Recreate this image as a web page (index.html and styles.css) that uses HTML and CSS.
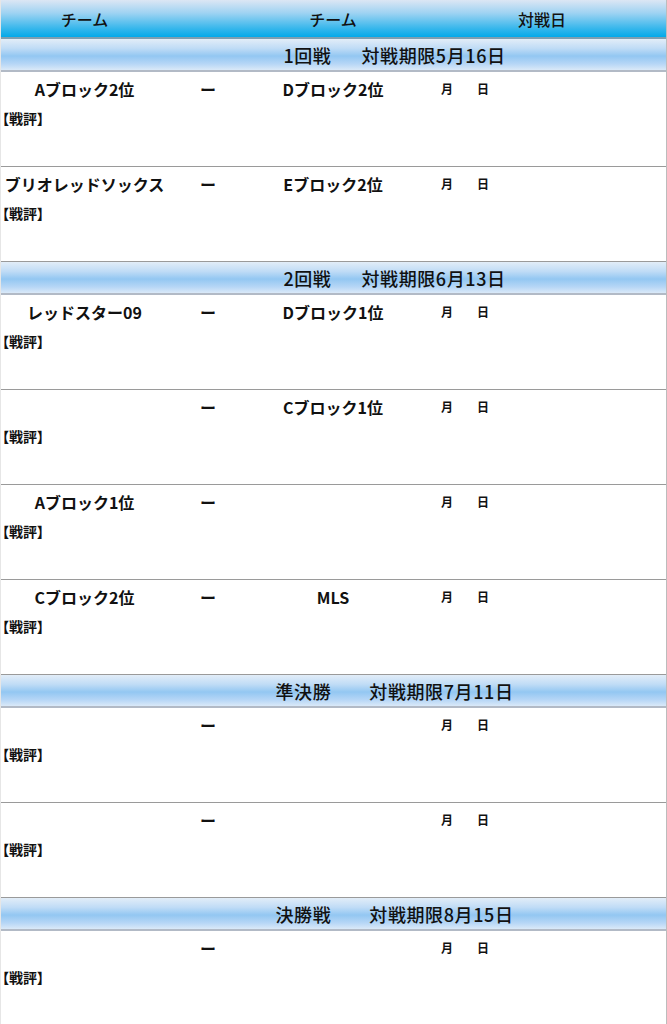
FILE: index.html
```html
<!DOCTYPE html>
<html lang="ja">
<head>
<meta charset="utf-8">
<title>トーナメント</title>
<link rel="stylesheet" href="styles.css">
</head>
<body>
<div class="board">
  <div class="head">
    <div class="c1">チーム</div>
    <div class="c2"></div>
    <div class="c3">チーム</div>
    <div class="c4">対戦日</div>
  </div>

  <div class="round"><span class="name">1回戦</span><span class="limit">対戦期限5月16日</span></div>
  <div class="match">
    <div class="line"><div class="c1">Aブロック2位</div><div class="c2">ー</div><div class="c3">Dブロック2位</div><div class="c4 date">月　　日</div></div>
    <div class="review">【戦評】</div>
  </div>
  <div class="match">
    <div class="line"><div class="c1">ブリオレッドソックス</div><div class="c2">ー</div><div class="c3">Eブロック2位</div><div class="c4 date">月　　日</div></div>
    <div class="review">【戦評】</div>
  </div>

  <div class="round"><span class="name">2回戦</span><span class="limit">対戦期限6月13日</span></div>
  <div class="match">
    <div class="line"><div class="c1">レッドスター09</div><div class="c2">ー</div><div class="c3">Dブロック1位</div><div class="c4 date">月　　日</div></div>
    <div class="review">【戦評】</div>
  </div>
  <div class="match">
    <div class="line"><div class="c1"></div><div class="c2">ー</div><div class="c3">Cブロック1位</div><div class="c4 date">月　　日</div></div>
    <div class="review">【戦評】</div>
  </div>
  <div class="match">
    <div class="line"><div class="c1">Aブロック1位</div><div class="c2">ー</div><div class="c3"></div><div class="c4 date">月　　日</div></div>
    <div class="review">【戦評】</div>
  </div>
  <div class="match">
    <div class="line"><div class="c1">Cブロック2位</div><div class="c2">ー</div><div class="c3">MLS</div><div class="c4 date">月　　日</div></div>
    <div class="review">【戦評】</div>
  </div>

  <div class="round wide"><span class="name">準決勝</span><span class="limit">対戦期限7月11日</span></div>
  <div class="match">
    <div class="line"><div class="c1"></div><div class="c2">ー</div><div class="c3"></div><div class="c4 date">月　　日</div></div>
    <div class="review">【戦評】</div>
  </div>
  <div class="match">
    <div class="line"><div class="c1"></div><div class="c2">ー</div><div class="c3"></div><div class="c4 date">月　　日</div></div>
    <div class="review">【戦評】</div>
  </div>

  <div class="round wide"><span class="name">決勝戦</span><span class="limit">対戦期限8月15日</span></div>
  <div class="match">
    <div class="line"><div class="c1"></div><div class="c2">ー</div><div class="c3"></div><div class="c4 date">月　　日</div></div>
    <div class="review">【戦評】</div>
  </div>
</div>
</body>
</html>
```

FILE: styles.css
```css
html, body {
  margin: 0;
  padding: 0;
  background: #ffffff;
}
body {
  font-family: "Noto Sans CJK JP", "Noto Sans", sans-serif;
  color: #111;
}
.board {
  width: 667px;
  box-sizing: border-box;
  border-right: 1px solid #bcbcbc;
  border-left: 1px solid #e6e6e6;
}
.head, .line {
  display: grid;
  grid-template-columns: 167px 80px 170px 1fr;
}
.head {
  height: 37px;
  align-items: center;
  font-size: 16px;
  font-weight: 500;
  text-align: center;
  background: linear-gradient(to bottom, #dce6f4 0%, #9fd3f2 35%, #3bb8ec 75%, #03a9e9 100%);
  border-bottom: 2px solid #7d9fb1;
}
.round {
  height: 31px;
  display: flex;
  justify-content: center;
  align-items: center;
  gap: 30px;
  font-size: 18px;
  font-weight: 500;
  letter-spacing: 0.6px;
  padding-left: 122px;
  background: linear-gradient(to bottom, #e2edf8 0%, #c0dcf6 30%, #93c7f2 55%, #b6d6f6 80%, #dae9f8 100%);
  border-bottom: 2px solid #b2bac6;
}
.round.wide {
  gap: 38px;
}
.match {
  height: 95px;
  border-bottom: 1px solid #9a9a9a;
  box-sizing: border-box;
}
.line {
  padding-top: 6px;
  height: 22px;
  align-items: center;
  font-size: 16px;
  font-weight: 700;
  text-align: center;
  line-height: 22px;
}
.date {
  text-align: left;
  padding-left: 23px;
  font-size: 12px;
  font-weight: 700;
  white-space: pre;
}
.review {
  margin-top: 10px;
  padding-left: 1px;
  font-size: 14px;
  font-weight: 700;
  line-height: 17px;
  font-feature-settings: "palt";
}
```
